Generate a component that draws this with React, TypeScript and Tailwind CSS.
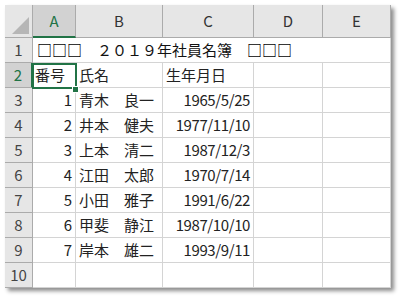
import React from 'react';

const cols = ['A', 'B', 'C', 'D', 'E'];

type Row = { a?: string; b?: string; c?: string; title?: boolean };

const rows: Row[] = [
  { title: true },
  { a: '番号', b: '氏名', c: '生年月日' },
  { a: '1', b: '青木　良一', c: '1965/5/25' },
  { a: '2', b: '井本　健夫', c: '1977/11/10' },
  { a: '3', b: '上本　清二', c: '1987/12/3' },
  { a: '4', b: '江田　太郎', c: '1970/7/14' },
  { a: '5', b: '小田　雅子', c: '1991/6/22' },
  { a: '6', b: '甲斐　静江', c: '1987/10/10' },
  { a: '7', b: '岸本　雄二', c: '1993/9/11' },
  {},
];

const font = { fontFamily: '"Noto Sans CJK JP", "Noto Sans", sans-serif' };

function Boxes() {
  return (
    <span className="inline-flex w-[45px] justify-between font-bold text-black">
      <span>□</span>
      <span>□</span>
      <span>□</span>
    </span>
  );
}

export default function App() {
  return (
    <div className="w-[399px] h-[297px] bg-white pl-[5px] pt-[5px]" style={font}>
      <div className="relative w-[386px] shadow-[3px_3px_4px_rgba(0,0,0,0.45)]">
        <div className="grid grid-cols-[28px_43px_87px_91px_69px_68px] grid-rows-[33px_repeat(10,25px)] text-[15px] text-[#222]">
          {/* corner */}
          <div className="relative bg-[#e6e6e6] border-r border-b border-[#ababab]">
            <svg className="absolute right-[3px] bottom-[3px]" width="17" height="17" viewBox="0 0 17 17">
              <polygon points="17,0 17,17 0,17" fill="#b6b6b6" />
            </svg>
          </div>
          {cols.map((c) => (
            <div
              key={c}
              className={
                c === 'A'
                  ? 'flex items-center justify-center bg-[#d2d2d2] border-r border-[#ababab] border-b-2 border-b-[#217346] text-[#217346] pt-[2px]'
                  : 'flex items-center justify-center bg-[#e6e6e6] border-r border-b border-[#ababab] text-[#333] pt-[1px]'
              }
            >
              {c}
            </div>
          ))}

          {rows.map((r, i) => (
            <React.Fragment key={i}>
              <div
                className={
                  i === 1
                    ? 'flex items-center justify-center bg-[#d2d2d2] border-b border-[#ababab] border-r-2 border-r-[#217346] text-[#217346]'
                    : 'flex items-center justify-center bg-[#e6e6e6] border-r border-b border-[#ababab] text-[#444]'
                }
              >
                {i + 1}
              </div>
              {r.title ? (
                <>
                  <div className="relative border-b border-[#d4d4d4] col-span-4">
                    <span className="absolute left-[4px] top-0 h-full flex items-center whitespace-nowrap z-10 text-[#111]">
                      <Boxes />　２０１９年社員名簿　<Boxes />
                    </span>
                  </div>
                  <div className="border-r border-b border-[#d4d4d4]" />
                </>
              ) : (
                <>
                  <div className="flex items-center justify-end pr-[3px] border-r border-b border-[#d4d4d4] whitespace-nowrap">
                    {r.a === '番号' ? <span className="mr-auto pl-[2px]">{r.a}</span> : r.a}
                  </div>
                  <div className="flex items-center pl-[3px] border-r border-b border-[#d4d4d4] whitespace-nowrap">
                    {r.b}
                  </div>
                  <div
                    className={
                      r.c === '生年月日'
                        ? 'flex items-center pl-[3px] border-r border-b border-[#d4d4d4] whitespace-nowrap'
                        : 'flex items-center justify-end pr-[3px] border-r border-b border-[#d4d4d4] whitespace-nowrap tracking-[-0.4px]'
                    }
                  >
                    {r.c}
                  </div>
                  <div className="border-r border-b border-[#d4d4d4]" />
                  <div className="border-r border-b border-[#d4d4d4]" />
                </>
              )}
            </React.Fragment>
          ))}
        </div>

        {/* selected cell A2 */}
        <div className="absolute left-[27px] top-[58px] w-[45px] h-[26px] border-2 border-[#217346] pointer-events-none" />
        <div className="absolute left-[68px] top-[82px] w-[5px] h-[5px] bg-[#217346] outline outline-1 outline-white" />
      </div>
    </div>
  );
}
